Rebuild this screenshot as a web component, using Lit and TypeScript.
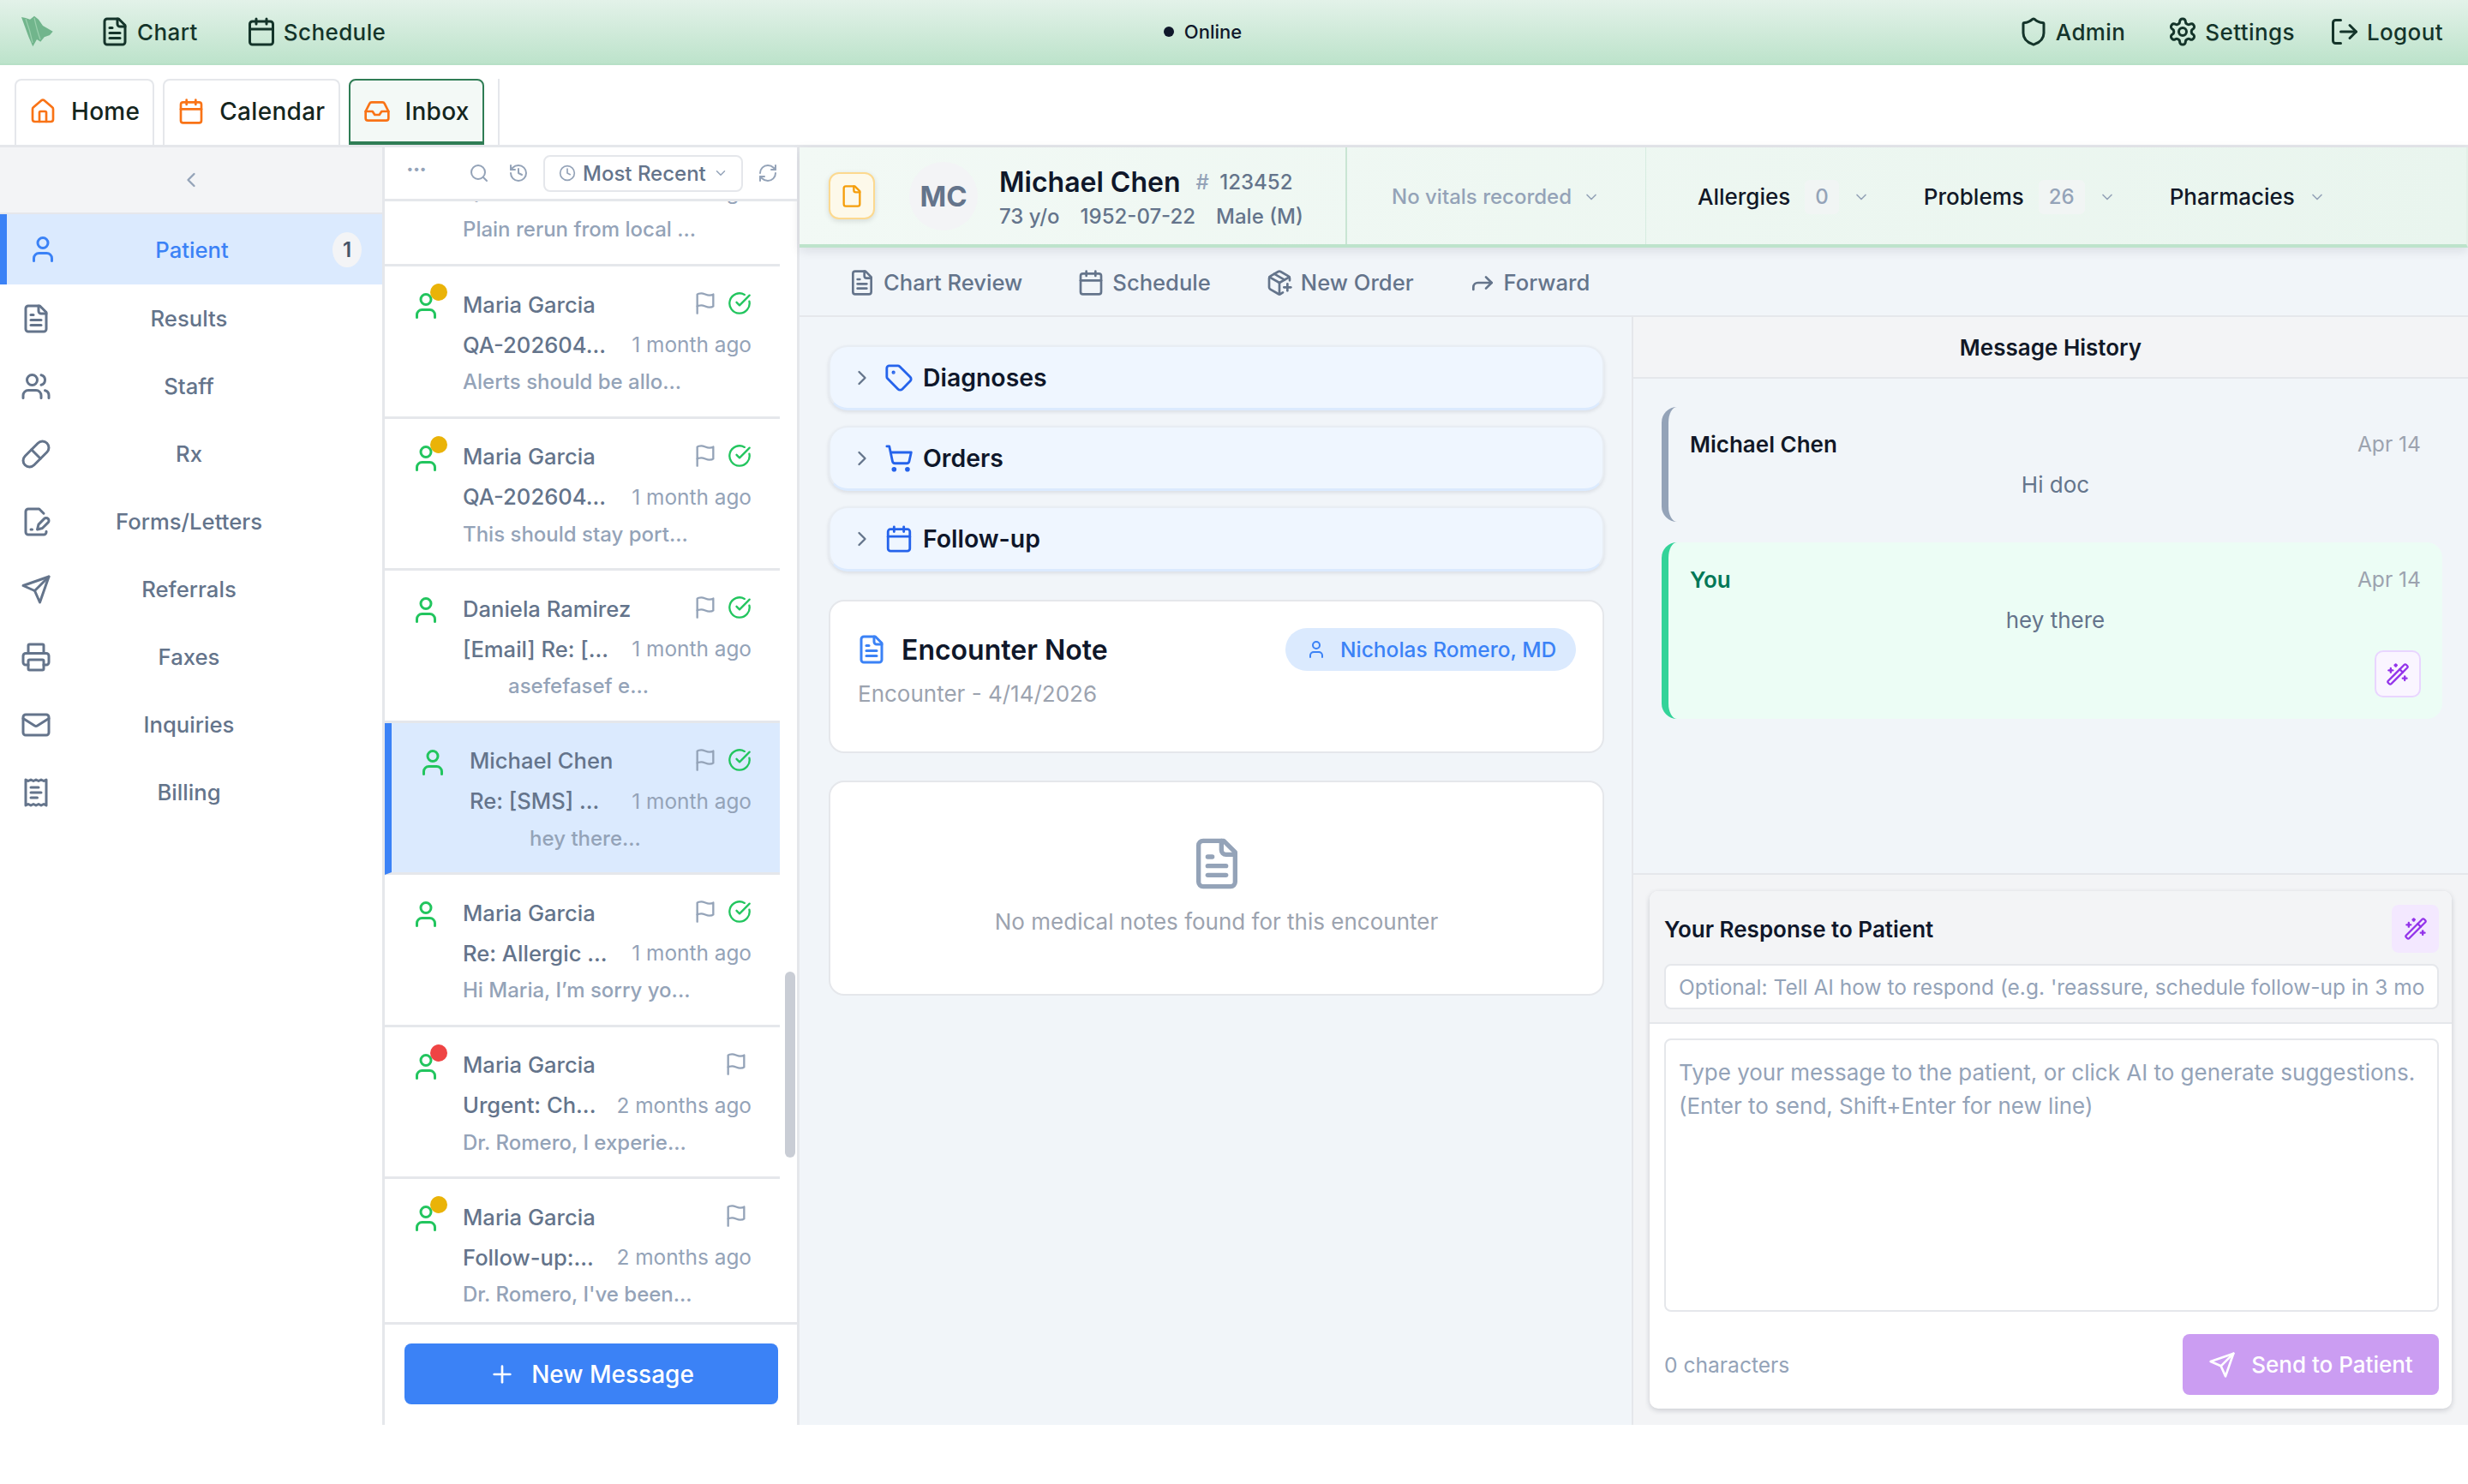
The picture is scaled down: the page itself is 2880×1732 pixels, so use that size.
import { LitElement, html, css, svg } from "lit";
import { customElement } from "lit/decorators.js";

const P: Record<string, any> = {
  fileText: svg`<path d="M15 2H6a2 2 0 0 0-2 2v16a2 2 0 0 0 2 2h12a2 2 0 0 0 2-2V7Z"/><path d="M14 2v4a2 2 0 0 0 2 2h4"/><path d="M10 9H8"/><path d="M16 13H8"/><path d="M16 17H8"/>`,
  file: svg`<path d="M15 2H6a2 2 0 0 0-2 2v16a2 2 0 0 0 2 2h12a2 2 0 0 0 2-2V7Z"/><path d="M14 2v4a2 2 0 0 0 2 2h4"/>`,
  calendar: svg`<path d="M8 2v4"/><path d="M16 2v4"/><rect width="18" height="18" x="3" y="4" rx="2"/><path d="M3 10h18"/>`,
  shield: svg`<path d="M20 13c0 5-3.5 7.5-7.66 8.95a1 1 0 0 1-.67-.01C7.5 20.5 4 18 4 13V6a1 1 0 0 1 1-1c2 0 4.5-1.2 6.24-2.72a1.17 1.17 0 0 1 1.52 0C14.51 3.81 17 5 19 5a1 1 0 0 1 1 1z"/>`,
  settings: svg`<path d="M12.22 2h-.44a2 2 0 0 0-2 2v.18a2 2 0 0 1-1 1.73l-.43.25a2 2 0 0 1-2 0l-.15-.08a2 2 0 0 0-2.73.73l-.22.38a2 2 0 0 0 .73 2.73l.15.1a2 2 0 0 1 1 1.72v.51a2 2 0 0 1-1 1.74l-.15.09a2 2 0 0 0-.73 2.73l.22.38a2 2 0 0 0 2.73.73l.15-.08a2 2 0 0 1 2 0l.43.25a2 2 0 0 1 1 1.73V20a2 2 0 0 0 2 2h.44a2 2 0 0 0 2-2v-.18a2 2 0 0 1 1-1.73l.43-.25a2 2 0 0 1 2 0l.15.08a2 2 0 0 0 2.73-.73l.22-.39a2 2 0 0 0-.73-2.73l-.15-.08a2 2 0 0 1-1-1.74v-.5a2 2 0 0 1 1-1.74l.15-.09a2 2 0 0 0 .73-2.73l-.22-.38a2 2 0 0 0-2.73-.73l-.15.08a2 2 0 0 1-2 0l-.43-.25a2 2 0 0 1-1-1.73V4a2 2 0 0 0-2-2z"/><circle cx="12" cy="12" r="3"/>`,
  logout: svg`<path d="M9 21H5a2 2 0 0 1-2-2V5a2 2 0 0 1 2-2h4"/><polyline points="16 17 21 12 16 7"/><line x1="21" x2="9" y1="12" y2="12"/>`,
  home: svg`<path d="M15 21v-8a1 1 0 0 0-1-1h-4a1 1 0 0 0-1 1v8"/><path d="M3 10a2 2 0 0 1 .709-1.528l7-5.999a2 2 0 0 1 2.582 0l7 5.999A2 2 0 0 1 21 10v9a2 2 0 0 1-2 2H5a2 2 0 0 1-2-2z"/>`,
  inbox: svg`<polyline points="22 12 16 12 14 15 10 15 8 12 2 12"/><path d="M5.45 5.11 2 12v6a2 2 0 0 0 2 2h16a2 2 0 0 0 2-2v-6l-3.45-6.89A2 2 0 0 0 16.76 4H7.24a2 2 0 0 0-1.79 1.11z"/>`,
  left: svg`<path d="m15 18-6-6 6-6"/>`,
  right: svg`<path d="m9 18 6-6-6-6"/>`,
  down: svg`<path d="m6 9 6 6 6-6"/>`,
  user: svg`<path d="M19 21v-2a4 4 0 0 0-4-4H9a4 4 0 0 0-4 4v2"/><circle cx="12" cy="7" r="4"/>`,
  users: svg`<path d="M16 21v-2a4 4 0 0 0-4-4H6a4 4 0 0 0-4 4v2"/><circle cx="9" cy="7" r="4"/><path d="M22 21v-2a4 4 0 0 0-3-3.87"/><path d="M16 3.13a4 4 0 0 1 0 7.75"/>`,
  pill: svg`<path d="m10.5 20.5 10-10a4.95 4.95 0 1 0-7-7l-10 10a4.95 4.95 0 1 0 7 7Z"/><path d="m8.5 8.5 7 7"/>`,
  sign: svg`<path d="M20 19.5v.5a2 2 0 0 1-2 2H6a2 2 0 0 1-2-2V4a2 2 0 0 1 2-2h8.5L18 5.5"/><path d="M8 18h1"/><path d="M18.42 9.61a2.1 2.1 0 1 1 2.97 2.97L16.95 17 13 18l.99-3.95 4.43-4.44Z"/>`,
  send: svg`<path d="m22 2-7 20-4-9-9-4Z"/><path d="M22 2 11 13"/>`,
  printer: svg`<path d="M6 18H4a2 2 0 0 1-2-2v-5a2 2 0 0 1 2-2h16a2 2 0 0 1 2 2v5a2 2 0 0 1-2 2h-2"/><path d="M6 9V3a1 1 0 0 1 1-1h10a1 1 0 0 1 1 1v6"/><rect x="6" y="14" width="12" height="8" rx="1"/>`,
  mail: svg`<rect width="20" height="16" x="2" y="4" rx="2"/><path d="m22 7-8.97 5.7a1.94 1.94 0 0 1-2.06 0L2 7"/>`,
  receipt: svg`<path d="M4 2v20l2-1 2 1 2-1 2 1 2-1 2 1 2-1 2 1V2l-2 1-2-1-2 1-2-1-2 1-2-1-2 1Z"/><path d="M14 8H8"/><path d="M16 12H8"/><path d="M13 16H8"/>`,
  search: svg`<circle cx="11" cy="11" r="8"/><path d="m21 21-4.3-4.3"/>`,
  history: svg`<path d="M3 12a9 9 0 1 0 9-9 9.75 9.75 0 0 0-6.74 2.74L3 8"/><path d="M3 3v5h5"/><path d="M12 7v5l4 2"/>`,
  clock: svg`<circle cx="12" cy="12" r="10"/><polyline points="12 6 12 12 16 14"/>`,
  refresh: svg`<path d="M3 12a9 9 0 0 1 9-9 9.75 9.75 0 0 1 6.74 2.74L21 8"/><path d="M21 3v5h-5"/><path d="M21 12a9 9 0 0 1-9 9 9.75 9.75 0 0 1-6.74-2.74L3 16"/><path d="M8 16H3v5"/>`,
  flag: svg`<path d="M4 15s1-1 4-1 5 2 8 2 4-1 4-1V3s-1 1-4 1-5-2-8-2-4 1-4 1z"/><line x1="4" x2="4" y1="22" y2="15"/>`,
  check: svg`<path d="M21.801 10A10 10 0 1 1 17 3.335"/><path d="m9 11 3 3L22 4"/>`,
  plus: svg`<path d="M5 12h14"/><path d="M12 5v14"/>`,
  pkg: svg`<path d="M16 16h6"/><path d="M19 13v6"/><path d="M21 10V8a2 2 0 0 0-1-1.73l-7-4a2 2 0 0 0-2 0l-7 4A2 2 0 0 0 3 8v8a2 2 0 0 0 1 1.73l7 4a2 2 0 0 0 2 0l2-1.14"/><path d="m7.5 4.27 9 5.15"/><polyline points="3.29 7 12 12 20.71 7"/><line x1="12" x2="12" y1="22" y2="12"/>`,
  forward: svg`<polyline points="15 17 20 12 15 7"/><path d="M4 18v-2a4 4 0 0 1 4-4h12"/>`,
  tag: svg`<path d="M12.586 2.586A2 2 0 0 0 11.172 2H4a2 2 0 0 0-2 2v7.172a2 2 0 0 0 .586 1.414l8.704 8.704a2.426 2.426 0 0 0 3.42 0l6.58-6.58a2.426 2.426 0 0 0 0-3.42z"/><circle cx="7.5" cy="7.5" r=".5" fill="currentColor"/>`,
  cart: svg`<circle cx="8" cy="21" r="1"/><circle cx="19" cy="21" r="1"/><path d="M2.05 2.05h2l2.66 12.42a2 2 0 0 0 2 1.58h9.78a2 2 0 0 0 1.95-1.57l1.65-7.43H5.12"/>`,
  wand: svg`<path d="m21.64 3.64-1.28-1.28a1.21 1.21 0 0 0-1.72 0L2.36 18.64a1.21 1.21 0 0 0 0 1.72l1.28 1.28a1.2 1.2 0 0 0 1.72 0L21.64 5.36a1.2 1.2 0 0 0 0-1.72"/><path d="m14 7 3 3"/><path d="M5 6v4"/><path d="M19 14v4"/><path d="M10 2v2"/><path d="M7 8H3"/><path d="M21 16h-4"/><path d="M11 3H9"/>`,
};

const ic = (n: string, size: number, cls = "") => html`<svg class="ic ${cls}" style="width:${size}px;height:${size}px" viewBox="0 0 24 24" fill="none" stroke="currentColor" stroke-width="2" stroke-linecap="round" stroke-linejoin="round">${P[n]}</svg>`;

const NAV = [
  ["Patient", "user"], ["Results", "fileText"], ["Staff", "users"], ["Rx", "pill"], ["Forms/Letters", "sign"],
  ["Referrals", "send"], ["Faxes", "printer"], ["Inquiries", "mail"], ["Billing", "receipt"],
];
const MSGS = [
  { n: "Maria Garcia", s: "QA-202604...", t: "1 month ago", p: "Alerts should be allo...", dot: "y", chk: true },
  { n: "Maria Garcia", s: "QA-202604...", t: "1 month ago", p: "This should stay port...", dot: "y", chk: true },
  { n: "Daniela Ramirez", s: "[Email] Re: [...", t: "1 month ago", p: "asefefasef e...", c: true, chk: true },
  { n: "Michael Chen", s: "Re: [SMS] ...", t: "1 month ago", p: "hey there...", c: true, chk: true, sel: true },
  { n: "Maria Garcia", s: "Re: Allergic ...", t: "1 month ago", p: "Hi Maria, I’m sorry yo...", chk: true },
  { n: "Maria Garcia", s: "Urgent: Ch...", t: "2 months ago", p: "Dr. Romero, I experie...", dot: "r" },
  { n: "Maria Garcia", s: "Follow-up:...", t: "2 months ago", p: "Dr. Romero, I've been...", dot: "y" },
];

@customElement("app-root")
export class AppRoot extends LitElement {
  static styles = css`
    :host { display: block; width: 2880px; height: 1732px; background: #fff; font-family: Inter, "Noto Sans", sans-serif; color: #111827; overflow: hidden; }
    * { box-sizing: border-box; }
    .ic { flex: none; display: block; }
    .top { height: 76px; background: linear-gradient(180deg, #e3f2e9 0%, #bde3cb 100%); border-bottom: 2px solid #b7e0c6; display: grid; grid-template-columns: 1fr auto 1fr; align-items: center; padding: 0 29px 0 24px; color: #14342a; font-size: 26px; font-weight: 500; letter-spacing: .4px; }
    .top .l, .top .r { display: flex; align-items: center; }
    .top .r { justify-content: flex-end; }
    .ti { display: flex; align-items: center; gap: 8px; }
    .ti.g56 { margin-right: 56px; }
    .ti.g49 { margin-right: 49px; }
    .ti.g40 { margin-right: 40px; }
    .logo { width: 40px; height: 38px; margin-right: 52px; flex: none; }
    .on { display: flex; align-items: center; gap: 12px; font-size: 22px; color: #0f172a; margin-right: 68px; letter-spacing: 0; }
    .on i { width: 12px; height: 12px; border-radius: 50%; background: #0f172a; }
    .tabs { height: 96px; display: flex; align-items: flex-end; gap: 10px; padding: 16px 0 0 17px; border-bottom: 3px solid #e5e7eb; font-size: 28px; letter-spacing: .3px; font-weight: 500; color: #14251d; }
    .tab { height: 77px; display: flex; align-items: center; gap: 17px; padding: 0 15px 3px; border: 2px solid #e5e7eb; border-bottom: none; border-radius: 8px 8px 0 0; }
    .tab .ic { color: #f97316; }
    .tab.on2 { background: #f3f9f6; border: 2px solid #2f7d55; border-bottom: 4px solid #2f7d55; padding-bottom: 0; }
    .sep { width: 2px; height: 77px; background: #e5e7eb; margin-left: 6px; }
    .body { display: flex; height: 1491px; }
    .side { width: 449px; flex: none; border-right: 3px solid #e5e7eb; background: #fff; }
    .sh { height: 78px; background: #f3f4f6; display: flex; align-items: center; justify-content: center; color: #94a3b8; border-bottom: 2px solid #e5e7eb; }
    .nav { display: flex; flex-direction: column; }
    .nv { height: 79px; display: flex; align-items: center; padding-left: 24px; color: #64748b; font-size: 25.7px; font-weight: 500; }
    .nv span { flex: 1; text-align: center; padding-right: 65px; }
    .nv.a { height: 82px; background: #dbeafe; color: #3b82f6; border-left: 8px solid #3b82f6; }
    .nv.a span { padding-right: 8px; }
    .bdg { width: 34px; height: 41px; border-radius: 50%; background: #f3f4f6; color: #475569; font-size: 24px; font-weight: 600; display: flex; align-items: center; justify-content: center; margin-right: 24px; }
    .list { width: 484px; flex: none; border-right: 3px solid #e5e7eb; display: flex; flex-direction: column; background: #fff; }
    .lt { height: 63px; flex: none; border-bottom: 3px solid #e5e7eb; display: flex; align-items: center; color: #94a3b8; padding-left: 26px; position: relative; z-index: 1; background: #fff; }
    .dots { width: 24px; font-size: 14px; letter-spacing: 1px; font-weight: 700; margin-right: 48px; margin-top: -12px; }
    .g22 { margin-right: 22px; }
    .g17 { margin-right: 17px; }
    .sel { width: 233px; height: 43px; border: 2px solid #e5e7eb; border-radius: 8px; display: flex; align-items: center; padding: 0 16px; gap: 8px; color: #64748b; font-size: 24px; margin-right: 17px; font-weight: 500; white-space: nowrap; }
    .sel .ic { color: #94a3b8; }
    .scr { flex: 1; position: relative; overflow: hidden; width: 481px; }
    .row0 { display: flow-root; height: 76px; border-bottom: 3px solid #e5e7eb; width: 461px; padding: 0 33px 0 91px; font-size: 24px; color: #94a3b8; font-weight: 500; white-space: nowrap; }
    .row0 .l2 { margin-top: -27px; }
    .row { width: 461px; height: 177.5px; border-bottom: 3px solid #e5e7eb; display: flex; padding: 28px 33px 0 30px; gap: 25px; }
    .row.s { background: #dbeafe; border-left: 8px solid #3b82f6; }
    .av { position: relative; width: 36px; height: 36px; color: #22c55e; flex: none; }
    .dot { position: absolute; left: 23px; top: -8px; width: 20px; height: 20px; border-radius: 50%; background: #eab308; }
    .dot.r { background: #ef4444; }
    .rc { flex: 1; min-width: 0; }
    .l1, .l2 { display: flex; justify-content: space-between; align-items: center; white-space: nowrap; }
    .l1 { height: 32px; font-size: 25.6px; font-weight: 500; color: #64748b; }
    .acts { display: flex; gap: 12px; align-items: center; margin-top: -2px; }
    .acts .fl { color: #94a3b8; }
    .acts .ck { color: #22c55e; }
    .acts.nc { margin-right: 4px; }
    .l2 { height: 32px; margin-top: 15px; font-size: 25.6px; font-weight: 500; color: #64748b; }
    .l2 em { font-style: normal; font-size: 24.4px; font-weight: 400; color: #94a3b8; }
    .pv { margin-top: 12px; width: 270px; font-size: 24px; color: #94a3b8; font-weight: 500; white-space: nowrap; line-height: 32px; }
    .pv.c { text-align: center; }
    .sb { position: absolute; right: 2px; top: 899px; width: 12px; height: 217px; background: #c9cdd5; border-radius: 6px; }
    .foot { height: 120px; flex: none; border-top: 3px solid #e5e7eb; padding: 22px 22px 0 23px; }
    .nm { height: 71px; width: 436px; background: #3b82f6; border-radius: 8px; color: #fff; display: flex; align-items: center; justify-content: center; gap: 18px; font-size: 28px; font-weight: 500; }
    .main { flex: 1; min-width: 0; display: flex; flex-direction: column; background: #f1f5f9; }
    .ph { height: 117px; flex: none; display: flex; background: linear-gradient(100deg, #f2f9f5, #e9f5ee); border-bottom: 4px solid #bde3cb; box-shadow: 0 4px 12px rgba(15,23,42,.1); position: relative; border-right: 2px solid #e2f0e7; }
    .seg { display: flex; align-items: center; border-right: 2px solid #c9e5d3; height: 100%; }
    .seg.a { width: 639px; padding-left: 34px; }
    .who { padding-top: 2px; }
    .seg.b { width: 349px; padding: 2px 0 0 52px; color: #94a3b8; font-size: 24px; gap: 13px; font-weight: 500; border-right: 1px solid #d6ece0; }
    .docb { width: 54px; height: 55px; border-radius: 12px; background: #fdf9ea; border: 2px solid #fcd98f; display: flex; align-items: center; justify-content: center; color: #f59e0b; box-shadow: 0 2px 6px rgba(0,0,0,.12); margin-right: 40px; }
    .avt { width: 80px; height: 80px; border-radius: 50%; background: #f3f4f6; color: #64748b; font-size: 33px; font-weight: 700; display: flex; align-items: center; justify-content: center; margin-right: 25px; }
    .pn { font-size: 32px; font-weight: 600; color: #0f172a; line-height: 42px; display: flex; align-items: center; gap: 18px; white-space: nowrap; }
    .pid { font-size: 24px; font-weight: 500; color: #64748b; }
    .pid i { font-style: normal; color: #94a3b8; margin-right: 6px; }
    .pi { font-size: 24px; font-weight: 500; color: #64748b; display: flex; gap: 24px; margin-top: 4px; white-space: nowrap; }
    .seg.c { padding: 2px 0 0 60px; border: none; font-size: 26px; font-weight: 500; color: #111827; white-space: nowrap; }
    .cnt { height: 40px; padding: 0 12px; background: #f1f5f4; color: #94a3b8; border-radius: 6px; display: flex; align-items: center; font-size: 24px; margin-left: 17px; }
    .cv { color: #94a3b8; margin-left: 16px; }
    .gap { margin-right: 63px; display: flex; align-items: center; }
    .ab { height: 81px; flex: none; border-bottom: 2px solid #e5e7eb; display: flex; align-items: center; padding: 2px 0 0 57px; font-size: 25.6px; color: #64748b; font-weight: 500; gap: 64px; }
    .abi { display: flex; align-items: center; gap: 9px; white-space: nowrap; }
    .cols { flex: 1; min-height: 0; display: flex; }
    .lc { width: 971px; flex: none; padding: 33px 32px 0 34px; display: flex; flex-direction: column; }
    .acc { height: 76px; border-radius: 22px; background: #eff6ff; border: 2px solid #e8edf3; border-bottom: 3px solid #dbeafe; box-shadow: 0 2px 4px rgba(15,23,42,.1); display: flex; align-items: center; padding-left: 23px; font-size: 28.4px; font-weight: 600; color: #0f172a; margin-bottom: 18px; }
    .acc .chv { color: #64748b; margin-right: 12px; }
    .acc .ai { color: #2563eb; margin-right: 11px; }
    .card { background: #fff; border: 2px solid #e5e7eb; border-radius: 18px; }
    .en { height: 179px; margin-top: 15px; padding: 31px 31px 0 32px; }
    .enh { display: flex; align-items: center; justify-content: space-between; }
    .ent { display: flex; align-items: center; gap: 17px; font-size: 32px; font-weight: 600; color: #0f172a; }
    .ent .ic { color: #3b82f6; margin-left: -2px; }
    .pill { height: 50px; width: 339px; border-radius: 25px; background: #dbeafe; color: #3b82f6; font-size: 24.5px; font-weight: 500; display: flex; align-items: center; gap: 16px; padding-left: 24px; white-space: nowrap; }
    .ens { margin-top: 11px; font-size: 26px; color: #9ca3af; font-weight: 400; }
    .nn { height: 251px; margin-top: 32px; display: flex; flex-direction: column; align-items: center; padding-top: 63px; color: #9ca3af; font-size: 26px; line-height: 32px; }
    .nn .ic { color: #94a3b8; margin-bottom: 20px; }
    .rc2 { flex: 1; min-width: 0; border-left: 2px solid #e5e7eb; display: flex; flex-direction: column; }
    .mh { height: 72px; flex: none; background: #f3f4f6; border-bottom: 2px solid #e5e7eb; display: flex; align-items: center; justify-content: center; font-size: 26px; font-weight: 600; color: #111827; }
    .ms { height: 579px; flex: none; padding: 33px 30px 0 33px; border-bottom: 2px solid #e5e7eb; display: flex; flex-direction: column; gap: 24px; }
    .m { border-left: 8px solid #94a3b8; border-radius: 18px; padding: 28px 25px 0 25px; }
    .m.u { height: 134px; }
    .m.y { height: 206px; border-left-color: #34d399; background: #ecfdf5; position: relative; }
    .mt { display: flex; justify-content: space-between; align-items: center; font-size: 26px; font-weight: 600; color: #111827; height: 30px; }
    .mt b { font-weight: 600; }
    .mt em { font-style: normal; font-weight: 400; color: #9ca3af; font-size: 24.6px; }
    .m.y .mt b { color: #047857; }
    .mb { text-align: center; margin-top: 17px; font-size: 26px; color: #64748b; line-height: 32px; }
    .wb { position: absolute; right: 25px; bottom: 25px; width: 54px; height: 55px; border-radius: 10px; background: #faf5ff; border: 2px solid #e9d5ff; color: #9333ea; display: flex; align-items: center; justify-content: center; }
    .cp { flex: 1; background: #f3f4f6; padding: 19px 19px 0 19px; }
    .cc { height: 604px; background: #fff; border-radius: 10px; box-shadow: 0 2px 6px rgba(15,23,42,.18); overflow: hidden; display: flex; flex-direction: column; }
    .chd { height: 155px; flex: none; background: #f3f4f6; border-bottom: 2px solid #e5e7eb; padding: 16px 15px 0 17px; }
    .chr { display: flex; align-items: center; justify-content: space-between; height: 56px; font-size: 26px; font-weight: 600; color: #0f172a; }
    .aib { width: 55px; height: 56px; border-radius: 8px; background: #f3e8ff; color: #9333ea; display: flex; align-items: center; justify-content: center; }
    .inp { height: 53px; margin-top: 13px; background: #fff; border: 2px solid #e5e7eb; border-radius: 8px; padding: 0 15px; display: flex; align-items: center; overflow: hidden; white-space: nowrap; font-size: 24.5px; color: #94a3b8; }
    .cbd { flex: 1; padding: 17px 15px 0 17px; }
    .ta { height: 319px; border: 2px solid #e5e7eb; border-radius: 8px; padding: 18px 15px; font-size: 26px; line-height: 39px; color: #94a3b8; white-space: nowrap; }
    .cf { display: flex; align-items: center; justify-content: space-between; margin-top: 26px; font-size: 24.6px; color: #94a3b8; }
    .sp { width: 299px; height: 71px; background: #cb9df2; border-radius: 8px; color: #fff; font-size: 26px; font-weight: 500; display: flex; align-items: center; justify-content: center; gap: 18px; }
  `;

  render() {
    return html`
      <header class="top">
        <div class="l">
          <svg class="logo" viewBox="0 0 40 38"><path d="M1 2 L6 3 L11 4.7 L16 .7 L21 4.7 L26 12 L37.7 18.7 L34 23 L27.7 25.3 L23.3 30.7 L19 28 L14.3 36.3 L9.3 24.7 Z" fill="#71b58c"/><path d="M6 4 C9 12 12 22 14 32 M16 3 C18 12 20 20 23 28" stroke="#9bd0ae" stroke-width="1.2" fill="none"/></svg>
          <div class="ti g56">${ic("fileText", 36)}Chart</div>
          <div class="ti">${ic("calendar", 36)}Schedule</div>
        </div>
        <div class="on"><i></i>Online</div>
        <div class="r">
          <div class="ti g49">${ic("shield", 36)}Admin</div>
          <div class="ti g40">${ic("settings", 36)}Settings</div>
          <div class="ti">${ic("logout", 36)}Logout</div>
        </div>
      </header>
      <div class="tabs">
        <div class="tab">${ic("home", 32)}Home</div>
        <div class="tab">${ic("calendar", 32)}Calendar</div>
        <div class="tab on2">${ic("inbox", 32)}Inbox</div>
        <div class="sep"></div>
      </div>
      <div class="body">
        <aside class="side">
          <div class="sh">${ic("left", 28)}</div>
          <div class="nav">
            ${NAV.map(([t, i], k) => html`<div class="nv ${k === 0 ? "a" : ""}">${ic(i, 36)}<span>${t}</span>${k === 0 ? html`<div class="bdg">1</div>` : ""}</div>`)}
          </div>
        </aside>
        <section class="list">
          <div class="lt">
            <div class="dots">•••</div>
            <div class="g22">${ic("search", 24)}</div>
            <div class="g17">${ic("history", 24)}</div>
            <div class="sel">${ic("clock", 20)}Most Recent${ic("down", 18)}</div>
            ${ic("refresh", 24)}
          </div>
          <div class="scr">
            <div class="row0">
              <div class="l2"><span>QA-202604...</span><em>1 month ago</em></div>
              <div class="pv">Plain rerun from local ...</div>
            </div>
            ${MSGS.map(m => html`
              <div class="row ${m.sel ? "s" : ""}">
                <div class="av">${ic("user", 36)}${m.dot ? html`<div class="dot ${m.dot === "r" ? "r" : ""}"></div>` : ""}</div>
                <div class="rc">
                  <div class="l1"><span>${m.n}</span>
                    <div class="acts ${m.chk ? "" : "nc"}">${ic("flag", 28, "fl")}${m.chk ? ic("check", 28, "ck") : ""}</div>
                  </div>
                  <div class="l2"><span>${m.s}</span><em>${m.t}</em></div>
                  <div class="pv ${m.c ? "c" : ""}">${m.p}</div>
                </div>
              </div>`)}
            <div class="sb"></div>
          </div>
          <div class="foot"><div class="nm">${ic("plus", 32)}New Message</div></div>
        </section>
        <main class="main">
          <div class="ph">
            <div class="seg a">
              <div class="docb">${ic("file", 28)}</div>
              <div class="avt">MC</div>
              <div class="who">
                <div class="pn">Michael Chen <span class="pid"><i>#</i> 123452</span></div>
                <div class="pi"><span>73 y/o</span><span>1952-07-22</span><span>Male (M)</span></div>
              </div>
            </div>
            <div class="seg b">No vitals recorded ${ic("down", 20)}</div>
            <div class="seg c">
              <div class="gap">Allergies<span class="cnt">0</span>${ic("down", 20, "cv")}</div>
              <div class="gap">Problems<span class="cnt">26</span>${ic("down", 20, "cv")}</div>
              <div class="gap">Pharmacies${ic("down", 20, "cv")}</div>
            </div>
          </div>
          <div class="ab">
            <div class="abi">${ic("fileText", 32)}Chart Review</div>
            <div class="abi">${ic("calendar", 32)}Schedule</div>
            <div class="abi">${ic("pkg", 32)}New Order</div>
            <div class="abi">${ic("forward", 32)}Forward</div>
          </div>
          <div class="cols">
            <div class="lc">
              <div class="acc">${ic("right", 28, "chv")}${ic("tag", 34, "ai")}Diagnoses</div>
              <div class="acc">${ic("right", 28, "chv")}${ic("cart", 34, "ai")}Orders</div>
              <div class="acc">${ic("right", 28, "chv")}${ic("calendar", 34, "ai")}Follow-up</div>
              <div class="card en">
                <div class="enh">
                  <div class="ent">${ic("fileText", 36)}Encounter Note</div>
                  <div class="pill">${ic("user", 24)}Nicholas Romero, MD</div>
                </div>
                <div class="ens">Encounter - 4/14/2026</div>
              </div>
              <div class="card nn">${ic("fileText", 64)}No medical notes found for this encounter</div>
            </div>
            <div class="rc2">
              <div class="mh">Message History</div>
              <div class="ms">
                <div class="m u">
                  <div class="mt"><b>Michael Chen</b><em>Apr 14</em></div>
                  <div class="mb">Hi doc</div>
                </div>
                <div class="m y">
                  <div class="mt"><b>You</b><em>Apr 14</em></div>
                  <div class="mb">hey there</div>
                  <div class="wb">${ic("wand", 28)}</div>
                </div>
              </div>
              <div class="cp">
                <div class="cc">
                  <div class="chd">
                    <div class="chr">Your Response to Patient<div class="aib">${ic("wand", 28)}</div></div>
                    <div class="inp">Optional: Tell AI how to respond (e.g. 'reassure, schedule follow-up in 3 mo</div>
                  </div>
                  <div class="cbd">
                    <div class="ta">Type your message to the patient, or click AI to generate suggestions.<br />(Enter to send, Shift+Enter for new line)</div>
                    <div class="cf"><span>0 characters</span><div class="sp">${ic("send", 32)}Send to Patient</div></div>
                  </div>
                </div>
              </div>
            </div>
          </div>
        </main>
      </div>
    `;
  }
}
